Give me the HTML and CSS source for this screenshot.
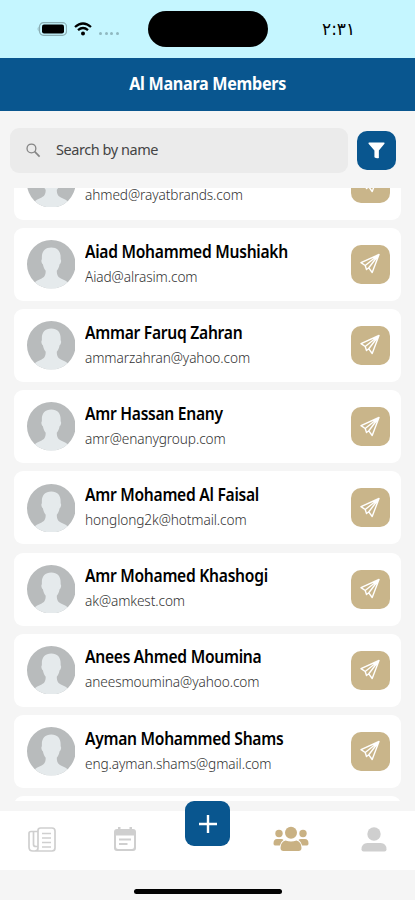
FILE: index.html
```
<!DOCTYPE html>
<html lang="en">
<head>
<meta charset="utf-8">
<meta name="viewport" content="width=device-width, initial-scale=1">
<title>Al Manara Members</title>
<link rel="stylesheet" href="styles.css">
</head>
<body>
<svg class="defs" aria-hidden="true">
  <symbol id="avatar" viewBox="0 0 48 48">
    <clipPath id="round"><circle cx="24" cy="24" r="24"/></clipPath>
    <g clip-path="url(#round)">
      <rect width="48" height="48" fill="#b8bbbc"/>
      <path d="M24 7.500c-6 0-9.300 3.700-9.300 9.500v2c-1 1-.3 4.500 1 5 .6 3 1.500 5 2.800 6.500 0 4-1 6-4 7.700C10.500 40 8.500 41 6.500 43v6h35v-6c-2-2-4-3-8-4.800-3-1.700-4-3.700-4-7.700 1.300-1.500 2.200-3.500 2.800-6.500 1.300-.5 2-4 1-5v-2c0-5.800-3.300-9.500-9.300-9.500z" fill="#e5eaec"/>
    </g>
  </symbol>
  <symbol id="send" viewBox="0 0 22 22">
    <path d="M20 1.500 2 9.700l4.200 2.800L20 1.500l-6.800 18-3.400-4.700L20 1.500M6.200 12.500l1.300 4 2.300-1.700" fill="none" stroke="#fff" stroke-width="1.400" stroke-linejoin="round" stroke-linecap="round"/>
  </symbol>
</svg>
<div class="phone">
  <div class="status">
    <div class="signals">
      <svg class="battery" viewBox="0 0 30 14"><rect x="2.500" y=".7" width="27" height="12.600" rx="4" fill="none" stroke="#8baeb4" stroke-width="1.200"/><path d="M1.500 4.500Q-.2 7 1.500 9.500z" fill="#8baeb4"/><rect x="5" y="2.500" width="22" height="9" rx="2"/></svg>
      <svg class="wifi" viewBox="0 0 18 14"><path d="M1 5Q9-2 17 5M4 8.200q5-4.300 10 0" fill="none" stroke="#000" stroke-width="2.300"/><circle cx="9" cy="11.500" r="2"/></svg>
      <div class="dots"><i></i><i></i><i></i><i></i></div>
    </div>
    <div class="island"></div>
    <div class="time">٢:٣١</div>
  </div>
  <header class="title"><span>Al Manara Members</span></header>
  <div class="tools">
    <div class="search">
      <svg class="magnifier" viewBox="0 0 16 16"><circle cx="5.800" cy="5.800" r="4.700" fill="none" stroke="#858585" stroke-width="1.400"/><path d="m9.300 9.300 5.200 5.200" stroke="#858585" stroke-width="1.800"/></svg>
      <span>Search by name</span>
    </div>
    <div class="filter"><svg viewBox="0 0 18 18"><path d="M1 .5h16q1 .5.400 1.400L11.500 9v8q-2.600.800-4.700-.8V9L.6 1.900Q.2.800 1 .5z" fill="#fff"/></svg></div>
  </div>
  <main class="list">
    <article class="card first"><svg class="avatar"><use href="#avatar"/></svg><div class="info"><p>ahmed@rayatbrands.com</p></div><div class="send"><svg><use href="#send"/></svg></div></article>
    <article class="card"><svg class="avatar"><use href="#avatar"/></svg><div class="info"><h2>Aiad Mohammed Mushiakh</h2><p>Aiad@alrasim.com</p></div><div class="send"><svg><use href="#send"/></svg></div></article>
    <article class="card"><svg class="avatar"><use href="#avatar"/></svg><div class="info"><h2>Ammar Faruq Zahran</h2><p>ammarzahran@yahoo.com</p></div><div class="send"><svg><use href="#send"/></svg></div></article>
    <article class="card"><svg class="avatar"><use href="#avatar"/></svg><div class="info"><h2>Amr Hassan Enany</h2><p>amr@enanygroup.com</p></div><div class="send"><svg><use href="#send"/></svg></div></article>
    <article class="card"><svg class="avatar"><use href="#avatar"/></svg><div class="info"><h2>Amr Mohamed Al Faisal</h2><p>honglong2k@hotmail.com</p></div><div class="send"><svg><use href="#send"/></svg></div></article>
    <article class="card"><svg class="avatar"><use href="#avatar"/></svg><div class="info"><h2>Amr Mohamed Khashogi</h2><p>ak@amkest.com</p></div><div class="send"><svg><use href="#send"/></svg></div></article>
    <article class="card"><svg class="avatar"><use href="#avatar"/></svg><div class="info"><h2>Anees Ahmed Moumina</h2><p>aneesmoumina@yahoo.com</p></div><div class="send"><svg><use href="#send"/></svg></div></article>
    <article class="card"><svg class="avatar"><use href="#avatar"/></svg><div class="info"><h2>Ayman Mohammed Shams</h2><p>eng.ayman.shams@gmail.com</p></div><div class="send"><svg><use href="#send"/></svg></div></article>
    <article class="card"></article>
  </main>
  <nav class="tabs">
    <div class="tab"><svg width="28" height="25" viewBox="0 0 28 25" fill="none" stroke="#cfcfcf" stroke-width="1.700"><path d="M10 3.500Q10 1 12.500 1h11.500q3 0 3 3v17q0 3-3 3H5q-4 0-4-4V6.500q0-2 2-2h7M10 3.500V21q0 3-3 3M5.500 5v12.500q0 2 2.500 2h2"/><path d="M14 6.500h9M14 11h9M14 15.500h9M14 20h9"/></svg></div>
    <div class="tab"><svg width="22" height="24" viewBox="0 0 22 24"><path d="M4 0h2.500v2h9V0H18v2h1q3 0 3 3v16q0 3-3 3H3q-3 0-3-3V5q0-3 3-3h1zM2 8.500V20q0 2 2 2h14q2 0 2-2V8.500z" fill="#cfcfcf" fill-rule="evenodd"/><path d="M5 12.500h12M5 17h8.500" stroke="#cfcfcf" stroke-width="1.800"/></svg></div>
    <div class="tab"><div class="add"><svg width="20" height="20" viewBox="0 0 20 20"><path d="M10 1v18M1 10h18" stroke="#fff" stroke-width="2.400"/></svg></div></div>
    <div class="tab"><svg width="36" height="26" viewBox="0 0 36 26" fill="#c9b183"><circle cx="18" cy="6.700" r="6"/><circle cx="6" cy="7.500" r="3.700"/><circle cx="30" cy="7.500" r="3.700"/><path d="M4 13h4q2 0 2.500 1-3 2-3.700 5.500H2q-1.500 0-1.500-2Q.5 13 4 13zM32 13h-4q-2 0-2.500 1 3 2 3.700 5.500H34q1.500 0 1.500-2 0-4.500-3.500-4.500zM12.500 14.500q5.500 2 11 0 5 1.500 5 7.500 0 3-3 3h-15q-3 0-3-3 0-6 5-7.500z"/></svg></div>
    <div class="tab"><svg width="26" height="25" viewBox="0 0 26 25" fill="#cfcfcf"><circle cx="13" cy="7" r="6.700"/><path d="M6.500 16h13q6 0 6 6.500 0 2-2 2h-21q-2 0-2-2 0-6.500 6-6.500z"/></svg></div>
  </nav>
  <div class="home"><i></i></div>
</div>
</body>
</html>
```

FILE: styles.css
```
* { box-sizing: border-box; }
body { margin: 0; background: #f5f5f5; font-family: "Noto Sans", "Open Sans", sans-serif; }
svg { display: block; flex: none; }
.defs { position: absolute; width: 0; height: 0; }
.phone { width: 415px; height: 900px; display: flex; flex-direction: column; overflow: hidden; }
.status { height: 57.5px; flex: none; background: #c5f6ff; display: grid; grid-template-columns: 148px 120px 1fr; }
.signals { display: flex; align-items: center; padding-left: 37px; gap: 7px; }
.battery { width: 30px; height: 14px; }
.wifi { width: 18px; height: 14px; }
.dots { display: flex; gap: 2.500px; margin-top: 9px; }
.dots i { width: 3px; height: 3px; border-radius: 50%; background: #8fb8c0; }
.island { height: 35.500px; margin-top: 11.200px; border-radius: 18px; background: #000; }
.time { padding-left: 54px; padding-top: 17.500px; font: 500 17px/22px "DejaVu Sans", sans-serif; direction: ltr; unicode-bidi: bidi-override; }
.title { height: 53.500px; flex: none; background: #09568f; color: #fff; font-weight: 700; font-size: 17px; line-height: 51px; letter-spacing: -.3px; text-align: center; }
.title span { display: inline-block; transform: scaleX(.95); }
.tools { height: 77px; flex: none; padding: 16.500px 19px 0 10px; display: flex; gap: 9.500px; }
.search { width: 338px; height: 45px; border-radius: 9px; background: #ebebeb; display: flex; align-items: center; padding-left: 16px; gap: 15px; color: #444; font-size: 14.500px; letter-spacing: -.45px; }
.search span { margin-top: -2px; }
.magnifier { width: 15px; height: 15px; }
.filter { width: 39px; height: 39px; margin-top: 3px; border-radius: 10px; background: #09568f; display: grid; place-items: center; }
.filter svg { width: 17px; height: 17px; }
.list { height: 613px; flex: none; padding: 0 14px; overflow: hidden; }
.card { height: 73px; margin-bottom: 8.200px; border-radius: 9px; background: #fff; display: flex; align-items: center; padding: 0 12px 0 12.500px; }
.first { margin-top: -41.400px; }
.first .info { padding-top: 25px; }
.avatar { width: 48.500px; height: 48.500px; }
.info { flex: 1; padding-left: 9.500px; margin-top: -1.500px; }
h2 { margin: 0; font-size: 17px; line-height: 25px; font-weight: 600; letter-spacing: -.3px; color: #000; white-space: nowrap; transform: scaleX(.919); transform-origin: left; }
p { margin: 0; font-size: 14.500px; line-height: 25px; font-weight: 300; letter-spacing: -.1px; color: #333; white-space: nowrap; transform: scaleX(.942); transform-origin: left; }
.send { width: 39px; height: 39px; margin-right: -.5px; border-radius: 10px; background: #c9b58a; display: grid; place-items: center; }
.send svg { width: 22px; height: 22px; }
.tabs { height: 59px; margin-top: 9.500px; flex: none; background: #fff; display: grid; grid-template-columns: repeat(5, 83px); align-items: center; }
.tab { display: flex; justify-content: center; margin-top: -2px; }
.add { width: 45px; height: 45px; margin-top: -31px; border-radius: 9px; background: #09568f; display: grid; place-items: center; }
.home { flex: 1; display: flex; justify-content: center; align-items: flex-start; padding-top: 19.500px; }
.home i { width: 148px; height: 4.500px; border-radius: 3px; background: #000; }
```
